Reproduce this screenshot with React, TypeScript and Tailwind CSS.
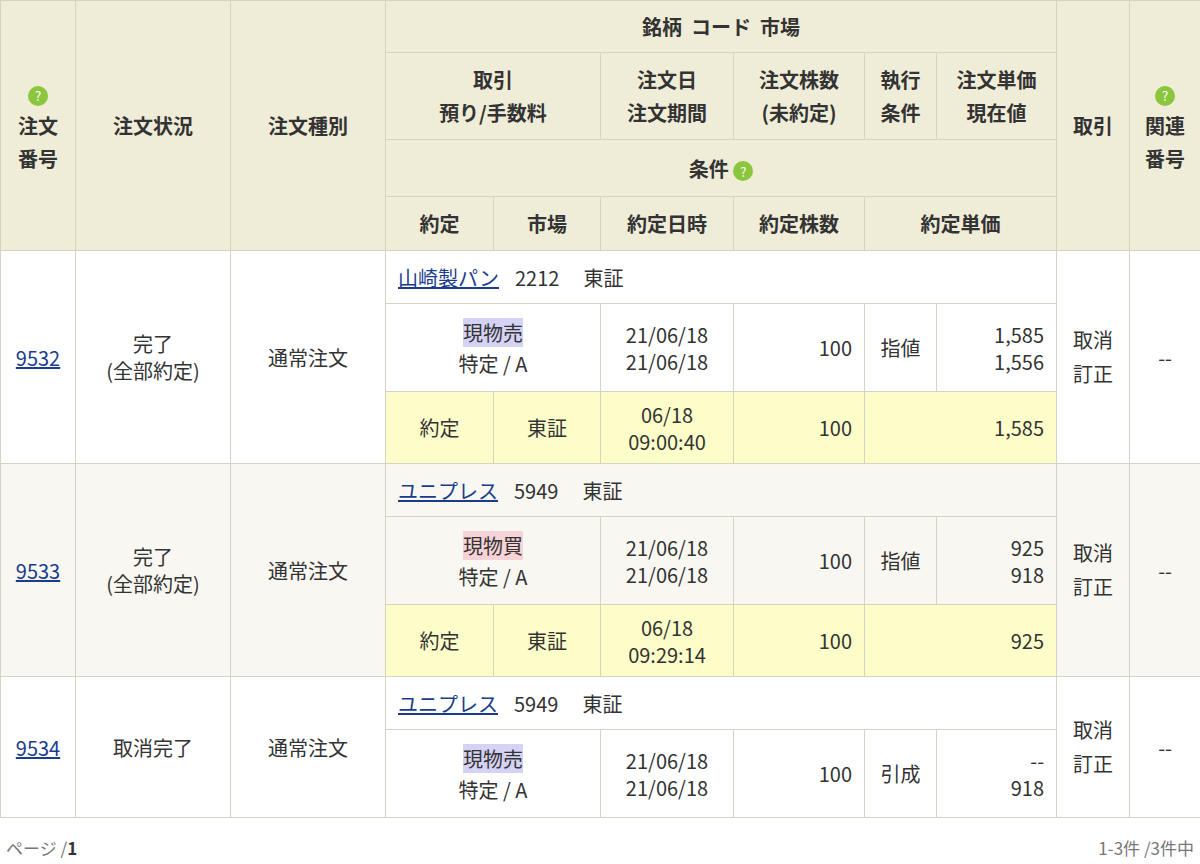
import React from "react";

const B = "border border-[#d6d3c3]";
const H = `${B} bg-[#efecd7] font-bold text-center text-[20px] leading-[33px]`;

function Q() {
  return (
    <span className="inline-flex items-center justify-center w-[20px] h-[20px] rounded-full bg-[#8cc63f] text-white text-[13px] font-normal leading-none align-middle">?</span>
  );
}

type R = {
  no: string; status: React.ReactNode; name: string; code: string; side: string; buy: boolean;
  qty: string; cond: string; p1: string; p2: string; fill?: { time: string; price: string }; bg: string;
};

const rows: R[] = [
  { no: "9532", status: <>完了<br />(全部約定)</>, name: "山崎製パン", code: "2212", side: "現物売", buy: false, qty: "100", cond: "指値", p1: "1,585", p2: "1,556", fill: { time: "09:00:40", price: "1,585" }, bg: "bg-white" },
  { no: "9533", status: <>完了<br />(全部約定)</>, name: "ユニプレス", code: "5949", side: "現物買", buy: true, qty: "100", cond: "指値", p1: "925", p2: "918", fill: { time: "09:29:14", price: "925" }, bg: "bg-[#f8f7f1]" },
  { no: "9534", status: "取消完了", name: "ユニプレス", code: "5949", side: "現物売", buy: false, qty: "100", cond: "引成", p1: "--", p2: "918", bg: "bg-white" },
];

export default function App() {
  return (
    <div className="w-[1200px] h-[864px] bg-white text-[#333] text-[20px] leading-[27px]" style={{ fontFamily: '"Noto Sans CJK JP", "Liberation Sans", sans-serif' }}>
      <table className="border-collapse w-[1200px] table-fixed">
        <colgroup>
          <col className="w-[75px]" /><col className="w-[155px]" /><col className="w-[155px]" /><col className="w-[108px]" /><col className="w-[107px]" /><col className="w-[133px]" /><col className="w-[131px]" /><col className="w-[72px]" /><col className="w-[120px]" /><col className="w-[73px]" /><col className="w-[71px]" />
        </colgroup>
        <thead>
          <tr className="h-[52px]">
            <th rowSpan={4} className={H}><Q /><br />注文<br />番号</th>
            <th rowSpan={4} className={H}>注文状況</th>
            <th rowSpan={4} className={H}>注文種別</th>
            <th colSpan={6} className={H}>銘柄&nbsp; コード&nbsp; 市場</th>
            <th rowSpan={4} className={H}>取引</th>
            <th rowSpan={4} className={H}><Q /><br />関連<br />番号</th>
          </tr>
          <tr className="h-[87px]">
            <th colSpan={2} className={H}>取引<br />預り/手数料</th>
            <th className={H}>注文日<br />注文期間</th>
            <th className={H}>注文株数<br />(未約定)</th>
            <th className={H}>執行<br />条件</th>
            <th className={H}>注文単価<br />現在値</th>
          </tr>
          <tr className="h-[57px]">
            <th colSpan={6} className={H}>条件 <Q /></th>
          </tr>
          <tr className="h-[54px]">
            <th className={H}>約定</th>
            <th className={H}>市場</th>
            <th className={H}>約定日時</th>
            <th className={H}>約定株数</th>
            <th colSpan={2} className={H}>約定単価</th>
          </tr>
        </thead>
        <tbody>
          {rows.map((r) => {
            const n = r.fill ? 3 : 2;
            const c = `${B} ${r.bg} text-center`;
            return (
              <React.Fragment key={r.no}>
                <tr className="h-[53px]">
                  <td rowSpan={n} className={c}><span className="text-[#1a3c8c] underline">{r.no}</span></td>
                  <td rowSpan={n} className={c}>{r.status}</td>
                  <td rowSpan={n} className={c}>通常注文</td>
                  <td colSpan={6} className={`${B} ${r.bg} px-3`}>
                    <span className="text-[#1a3c8c] underline">{r.name}</span>
                    <span className="ml-4">{r.code}</span>
                    <span className="ml-6">東証</span>
                  </td>
                  <td rowSpan={n} className={`${c} leading-[34px]`}>取消<br />訂正</td>
                  <td rowSpan={n} className={c}>--</td>
                </tr>
                <tr className="h-[88px]">
                  <td colSpan={2} className={c}>
                    <span className={r.buy ? "bg-[#f7d2d6]" : "bg-[#d4d2f5]"}>{r.side}</span><br />
                    <span className="inline-block mt-1">特定 / A</span>
                  </td>
                  <td className={c}>21/06/18<br />21/06/18</td>
                  <td className={`${B} ${r.bg} text-right pr-3`}>{r.qty}</td>
                  <td className={c}>{r.cond}</td>
                  <td className={`${B} ${r.bg} text-right pr-3`}>{r.p1}<br />{r.p2}</td>
                </tr>
                {r.fill && (
                  <tr className="h-[72px] bg-[#fdfdc9]">
                    <td className={`${B} text-center`}>約定</td>
                    <td className={`${B} text-center`}>東証</td>
                    <td className={`${B} text-center`}>06/18<br />{r.fill.time}</td>
                    <td className={`${B} text-right pr-3`}>100</td>
                    <td colSpan={2} className={`${B} text-right pr-3`}>{r.fill.price}</td>
                  </tr>
                )}
              </React.Fragment>
            );
          })}
        </tbody>
      </table>
      <div className="flex justify-between px-[6px] mt-[16px] text-[17px] text-[#777]">
        <span>ページ /<b className="text-[#333]">1</b></span>
        <span>1-3件 /3件中</span>
      </div>
    </div>
  );
}
